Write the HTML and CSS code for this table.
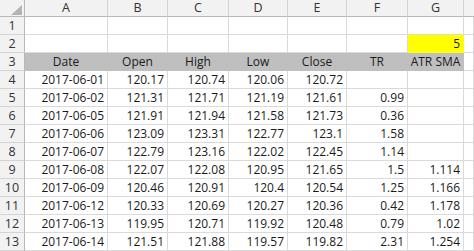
FILE: index.html
```html
<!DOCTYPE html>
<html>
<head>
<meta charset="utf-8">
<link rel="stylesheet" href="styles.css">
</head>
<body>
<div class="sheet">
  <div class="ch corner"><span class="tri"></span></div>
  <div class="ch">A</div><div class="ch">B</div><div class="ch">C</div><div class="ch">D</div><div class="ch">E</div><div class="ch">F</div><div class="ch">G</div><div class="ch last"></div>

  <div class="rh">1</div><div class="c"></div><div class="c"></div><div class="c"></div><div class="c"></div><div class="c"></div><div class="c"></div><div class="c"></div><div class="c"></div>
  <div class="rh">2</div><div class="c"></div><div class="c"></div><div class="c"></div><div class="c"></div><div class="c"></div><div class="c"></div><div class="c yellow">5</div><div class="c"></div>
  <div class="rh">3</div><div class="c hd">Date</div><div class="c hd">Open</div><div class="c hd">High</div><div class="c hd">Low</div><div class="c hd">Close</div><div class="c hd">TR</div><div class="c hd">ATR SMA</div><div class="c"></div>

  <div class="rh">4</div><div class="c">2017-06-01</div><div class="c">120.17</div><div class="c">120.74</div><div class="c">120.06</div><div class="c">120.72</div><div class="c"></div><div class="c"></div><div class="c"></div>
  <div class="rh">5</div><div class="c">2017-06-02</div><div class="c">121.31</div><div class="c">121.71</div><div class="c">121.19</div><div class="c">121.61</div><div class="c">0.99</div><div class="c"></div><div class="c"></div>
  <div class="rh">6</div><div class="c">2017-06-05</div><div class="c">121.91</div><div class="c">121.94</div><div class="c">121.58</div><div class="c">121.73</div><div class="c">0.36</div><div class="c"></div><div class="c"></div>
  <div class="rh">7</div><div class="c">2017-06-06</div><div class="c">123.09</div><div class="c">123.31</div><div class="c">122.77</div><div class="c">123.1</div><div class="c">1.58</div><div class="c"></div><div class="c"></div>
  <div class="rh">8</div><div class="c">2017-06-07</div><div class="c">122.79</div><div class="c">123.16</div><div class="c">122.02</div><div class="c">122.45</div><div class="c">1.14</div><div class="c"></div><div class="c"></div>
  <div class="rh">9</div><div class="c">2017-06-08</div><div class="c">122.07</div><div class="c">122.08</div><div class="c">120.95</div><div class="c">121.65</div><div class="c">1.5</div><div class="c">1.114</div><div class="c"></div>
  <div class="rh">10</div><div class="c">2017-06-09</div><div class="c">120.46</div><div class="c">120.91</div><div class="c">120.4</div><div class="c">120.54</div><div class="c">1.25</div><div class="c">1.166</div><div class="c"></div>
  <div class="rh">11</div><div class="c">2017-06-12</div><div class="c">120.33</div><div class="c">120.69</div><div class="c">120.27</div><div class="c">120.36</div><div class="c">0.42</div><div class="c">1.178</div><div class="c"></div>
  <div class="rh">12</div><div class="c">2017-06-13</div><div class="c">119.95</div><div class="c">120.71</div><div class="c">119.92</div><div class="c">120.48</div><div class="c">0.79</div><div class="c">1.02</div><div class="c"></div>
  <div class="rh">13</div><div class="c">2017-06-14</div><div class="c">121.51</div><div class="c">121.88</div><div class="c">119.57</div><div class="c">119.82</div><div class="c">2.31</div><div class="c">1.254</div><div class="c"></div>
</div>
</body>
</html>
```

FILE: styles.css
```css
html, body {
  margin: 0;
  padding: 0;
  background: #ffffff;
  overflow: hidden;
}

.sheet {
  display: grid;
  grid-template-columns: 25px 83px 60px 61px 59px 59px 61px 56px 10px;
  grid-template-rows: 17px repeat(13, 18px);
  font-family: "Open Sans", "Noto Sans", sans-serif;
  font-size: 12px;
  color: #1a1a1a;
}

.ch {
  box-sizing: border-box;
  background: #f2f2f2;
  border-right: 1px solid #d4d4d4;
  border-bottom: 1px solid #b8b8b8;
  text-align: center;
  line-height: 16px;
  font-size: 12.5px;
  color: #333333;
}

.ch.last {
  border-right: none;
}

.corner {
  position: relative;
  border-right: 1px solid #b8b8b8;
}

.tri {
  position: absolute;
  right: 2px;
  bottom: 1px;
  width: 11px;
  height: 10px;
  background: #b3b3b3;
  clip-path: polygon(100% 0, 100% 100%, 0 100%);
}

.rh {
  box-sizing: border-box;
  background: #f2f2f2;
  border-right: 1px solid #b8b8b8;
  border-bottom: 1px solid #d4d4d4;
  text-align: center;
  line-height: 17px;
  font-size: 12.5px;
  color: #333333;
}

.c {
  box-sizing: border-box;
  border-right: 1px solid #dadada;
  border-bottom: 1px solid #dadada;
  text-align: right;
  padding-right: 3px;
  line-height: 17px;
  white-space: nowrap;
  overflow: hidden;
}

.c.hd {
  background: #bfbfbf;
  border-right-color: #bfbfbf;
  border-bottom-color: #bfbfbf;
  text-align: center;
  padding-right: 0;
}

.c.yellow {
  background: #ffff00;
  border-right-color: #ffff00;
  border-bottom-color: #ffff00;
}
```
